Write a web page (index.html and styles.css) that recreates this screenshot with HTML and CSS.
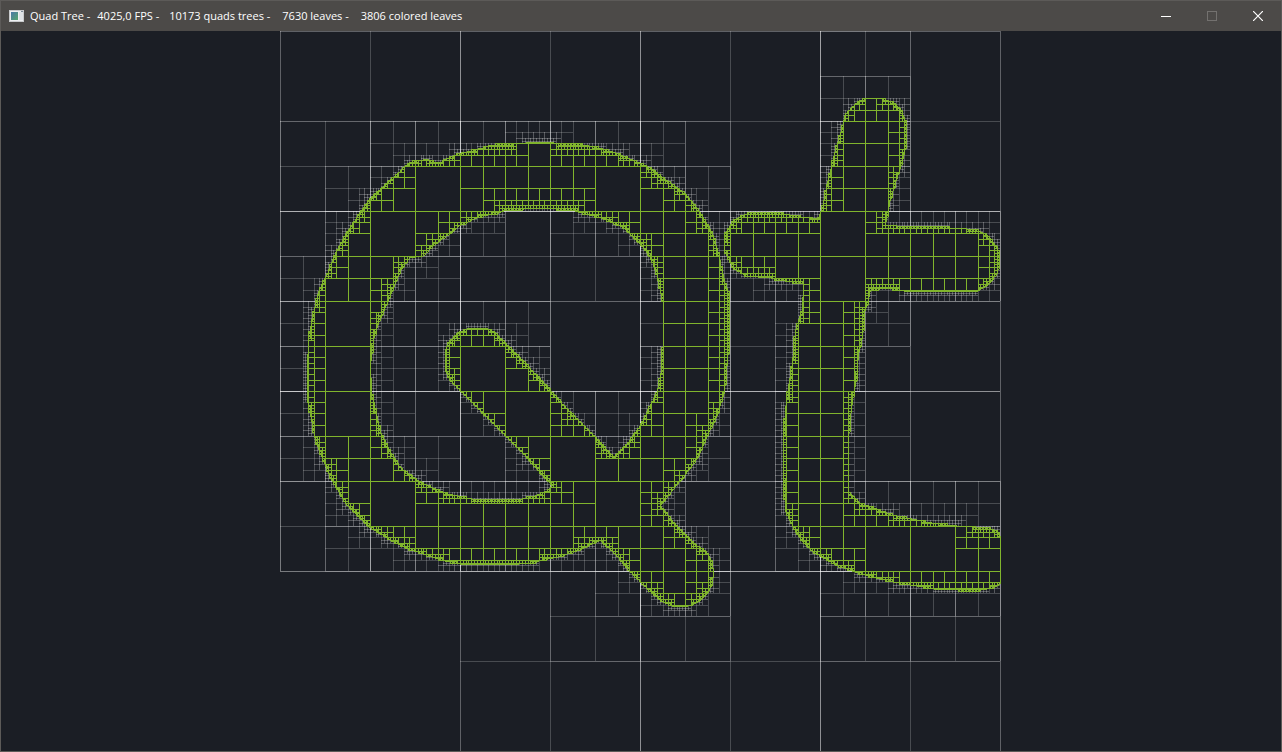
FILE: index.html
```html
<!DOCTYPE html>
<html lang="en">
<head>
<meta charset="utf-8">
<title>Quad Tree</title>
<link rel="stylesheet" href="styles.css">
</head>
<body>
<div class="window">
  <header class="titlebar">
    <svg class="app-icon" width="15" height="12" viewBox="0 0 15 12" aria-hidden="true">
      <defs>
        <linearGradient id="pane" x1="0" y1="0" x2="1" y2="1">
          <stop offset="0" stop-color="#4a78a8"/>
          <stop offset="1" stop-color="#56a66c"/>
        </linearGradient>
      </defs>
      <rect width="15" height="12" fill="#c9cbcd"/>
      <rect x="1" y="1" width="13" height="10" fill="#eef0f1"/>
      <rect x="2" y="2" width="7" height="8" fill="url(#pane)"/>
      <rect x="10" y="2" width="4" height="8" fill="#dfe3e6"/>
      <rect x="12" y="1" width="2" height="1" fill="#7d8b99"/>
    </svg>
    <h1 class="title"><span>Quad Tree -</span><span>4025,0 FPS -</span><span class="trees">10173 quads trees -</span><span class="leaves">7630 leaves -</span><span class="leaves">3806 colored leaves</span></h1>
    <div class="controls">
      <button class="control" type="button" aria-label="Minimize">
        <svg width="10" height="10" viewBox="0 0 10 10"><path d="M0 5.5H10" stroke="#fff" fill="none"/></svg>
      </button>
      <button class="control" type="button" aria-label="Maximize" disabled>
        <svg width="10" height="10" viewBox="0 0 10 10"><rect x=".5" y=".5" width="9" height="9" stroke="#73716f" fill="none"/></svg>
      </button>
      <button class="control" type="button" aria-label="Close">
        <svg width="10" height="10" viewBox="0 0 10 10"><path d="M0 0L10 10M10 0L0 10" stroke="#fff" stroke-width="1.2" fill="none"/></svg>
      </button>
    </div>
  </header>
  <canvas class="view" id="view"></canvas>
</div>
<script src="quadtree.js"></script>
</body>
</html>
```
FILE: styles.css
```css
* {
  box-sizing: border-box;
}

body {
  margin: 0;
  background: #1b1e25;
  font-family: "Open Sans", "Noto Sans", sans-serif;
}

.window {
  display: flex;
  flex-direction: column;
  height: 100vh;
  border: 1px solid #5c5a58;
}

.titlebar {
  display: flex;
  align-items: stretch;
  flex: none;
  height: 30px;
  padding-left: 8px;
  background: #4c4a48;
  color: #fff;
}

.app-icon {
  align-self: center;
  flex: none;
}

.title {
  display: flex;
  align-items: center;
  flex: 1;
  gap: 7px;
  min-width: 0;
  margin: 0;
  padding-left: 6px;
  overflow: hidden;
  font-size: 11px;
  font-weight: 400;
  line-height: 16px;
  white-space: nowrap;
}

.trees {
  margin-left: 3px;
}

.leaves {
  margin-left: 5px;
}

.controls {
  display: flex;
}

.control {
  display: flex;
  align-items: center;
  justify-content: center;
  width: 46px;
  padding: 0;
  border: 0;
  background: transparent;
}

.view {
  display: block;
  flex: 1;
  width: 100%;
  min-height: 0;
}
```
FILE: quadtree.js
```js
(function () {
  // Outlines live in a 720 x 720 space whose corner is at (280, 31).
  var ORIGIN_X = 280, ORIGIN_Y = 31, SIZE = 720, MIN = 1.5;

  var outlines = [
    // Q, outer edge
    [460,153, 478,149, 490,145, 500,144, 527,143, 528,142, 550,142, 563,144, 580,144, 600,148, 617,153, 630,159,
     640,163, 650,168, 663,178, 685,193, 700,213, 712,233, 718,253, 723,277, 728,292, 729,320, 728,350, 724,391,
     717,415, 708,433, 697,458, 683,477, 660,505, 675,525, 693,542, 707,553, 712,563, 713,573, 712,583, 707,593,
     697,602, 687,606, 673,606, 660,600, 640,582, 627,568, 615,553, 600,540, 580,549, 560,556, 545,559, 530,563,
     507,564, 463,564, 443,560, 430,556, 407,548, 387,538, 370,527, 347,505, 330,477, 315,440, 312,423, 307,400,
     307,367, 308,340, 312,317, 318,292, 327,273, 335,253, 348,230, 360,212, 370,198, 393,177, 405,165, 413,161,
     427,159, 438,163, 447,158],
    // Q, counter and the slash that cuts into it
    [460,225, 480,216, 500,212, 505,209, 540,208, 573,209, 580,212, 603,218, 623,227, 640,243, 652,260, 657,277,
     662,300, 663,301, 663,346, 662,348, 661,370, 657,391, 650,405, 640,425, 627,443, 613,457, 595,437, 573,415, 550,390,
     527,365, 505,342, 495,332, 485,328, 468,328, 458,332, 448,342, 445,350, 445,370, 450,380, 462,392, 483,413,
     507,437, 527,458, 552,485, 548,490, 537,495, 520,499, 507,500, 473,499, 450,494, 437,490, 417,480, 400,467,
     390,452, 380,432, 375,410, 371,390, 370,365, 373,340, 378,322, 387,303, 395,283, 400,270, 410,257, 422,256,
     433,245, 450,233],
    // t
    [865,98, 880,98, 892,102, 900,109, 905,120, 906,140, 903,157, 895,183, 889,203, 885,225, 907,226, 940,227,
     975,229, 987,235, 997,247, 999,257, 997,273, 988,284, 977,291, 937,291, 907,291, 888,288, 870,289, 867,303,
     864,313, 862,337, 858,353, 856,380, 853,393, 850,417, 848,437, 848,492, 860,503, 877,509, 893,515, 913,519,
     933,523, 960,526, 987,527, 998,532, 1001,540, 1001,584, 990,588, 977,590, 937,589, 920,586, 900,583, 887,580,
     870,576, 853,571, 837,565, 813,552, 800,538, 792,525, 785,510, 783,467, 783,443, 785,410, 788,387, 792,363,
     795,330, 802,310, 803,283, 775,279, 770,277, 747,276, 733,268, 724,250, 725,233, 733,220, 747,213, 780,213,
     803,217, 818,218, 822,207, 827,183, 835,150, 842,127, 845,113, 855,103]
  ];

  // Summed-area table of the filled outlines.
  function buildTable() {
    var mask = document.createElement('canvas');
    mask.width = mask.height = SIZE;
    var m = mask.getContext('2d');
    m.translate(-ORIGIN_X, -ORIGIN_Y);
    m.beginPath();
    outlines.forEach(function (p) {
      m.moveTo(p[0], p[1]);
      for (var i = 2; i < p.length; i += 2) m.lineTo(p[i], p[i + 1]);
      m.closePath();
    });
    m.fill('evenodd');
    var data = m.getImageData(0, 0, SIZE, SIZE).data;
    var w = SIZE + 1;
    var table = new Int32Array(w * w);
    for (var y = 0; y < SIZE; y++) {
      var row = 0;
      for (var x = 0; x < SIZE; x++) {
        row += data[(y * SIZE + x) * 4 + 3] > 127 ? 1 : 0;
        table[(y + 1) * w + x + 1] = table[y * w + x + 1] + row;
      }
    }
    return table;
  }

  var table = buildTable();
  function snapX(v) { return Math.floor(v + 0.5); }
  function snapY(v) { return Math.ceil(v - 0.5); }

  function draw() {
    var canvas = document.getElementById('view');
    var width = canvas.clientWidth, height = canvas.clientHeight;
    canvas.width = width;
    canvas.height = height;
    var ctx = canvas.getContext('2d');
    var scale = Math.min(width, height) / SIZE;
    var side = SIZE * scale;
    ctx.translate(Math.max(0, Math.floor((width - side - 1) / 2)), Math.max(0, Math.floor((height - side) / 2)));

    var filled = [];
    var w = SIZE + 1;

    function hline(x0, x1, y) {
      x0 = snapX(x0 * scale); x1 = snapX(x1 * scale);
      ctx.fillRect(x0, snapY(y * scale), x1 - x0, 1);
    }
    function vline(x, y0, y1) {
      y0 = snapY(y0 * scale); y1 = snapY(y1 * scale);
      ctx.fillRect(snapX(x * scale), y0, 1, y1 - y0);
    }
    function box(x, y, s) {
      hline(x, x + s, y);
      hline(x, x + s, y + s);
      vline(x, y, y + s);
      vline(x + s, y, y + s);
    }

    function visit(x, y, s) {
      var x0 = snapX(x), y0 = snapY(y), x1 = snapX(x + s), y1 = snapY(y + s);
      var sum = table[y1 * w + x1] - table[y0 * w + x1] - table[y1 * w + x0] + table[y0 * w + x0];
      var area = (x1 - x0) * (y1 - y0);
      if (sum === 0) return;
      if (sum === area || s < MIN) {
        if (sum * 2 >= area) filled.push([x, y, s]);
        return;
      }
      var h = s / 2;
      if (s <= 180 && s > 5) {
        ctx.fillStyle = s > 100 ? 'rgba(255, 255, 255, 0.3)' : 'rgba(255, 255, 255, 0.16)';
        if (s > 40) box(x, y, s);
        ctx.fillStyle = s > 20 ? 'rgba(255, 255, 255, 0.2)' : 'rgba(255, 255, 255, 0.26)';
        hline(x, x + s, y + h);
        vline(x + h, y, y + s);
      }
      visit(x, y, h);
      visit(x + h, y, h);
      visit(x, y + h, h);
      visit(x + h, y + h, h);
    }

    visit(0, 0, SIZE);

    ctx.fillStyle = '#80b42d';
    filled.forEach(function (c) { box(c[0], c[1], c[2]); });
  }

  draw();
  window.addEventListener('resize', draw);
})();
```
